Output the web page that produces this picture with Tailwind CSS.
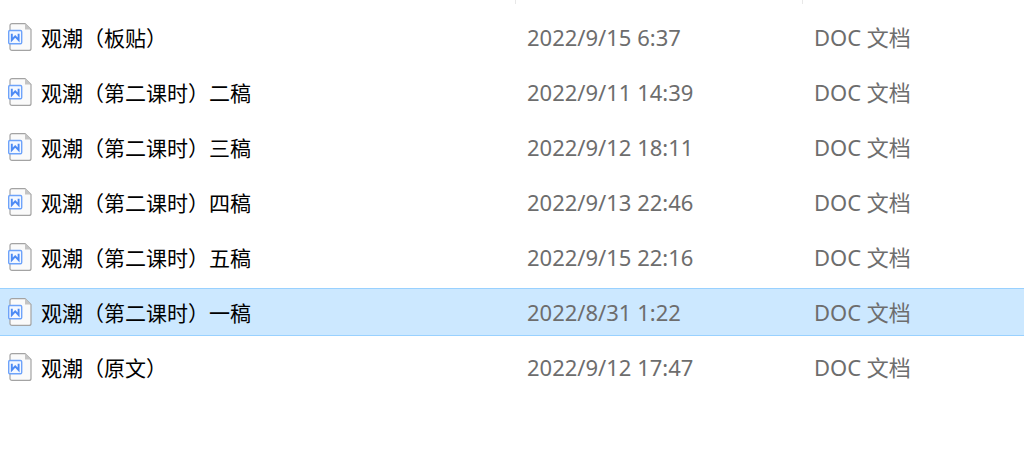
<!DOCTYPE html>
<html lang="zh-CN">

<head>
  <meta charset="UTF-8" />
  <meta name="viewport" content="width=device-width, initial-scale=1.0" />
  <title>观潮</title>
  <script src="https://cdn.jsdelivr.net/npm/@tailwindcss/browser@4"></script>
</head>

<body class="bg-white font-['Noto_Sans','Noto_Sans_CJK_SC',sans-serif]">
  <svg class="hidden">
    <symbol id="doc-icon" viewBox="0 0 24 28">
      <path d="M4 0.6H17L23 6.6V25.4a2 2 0 0 1-2 2H4A2 2 0 0 1 2 25.4V2.6A2 2 0 0 1 4 0.6Z" fill="#fafafa" stroke="#a3a3a3" stroke-width="1.2" />
      <path d="M17 0.6V6.6H23Z" fill="#c4c4c4" />
      <rect x="0.7" y="7.5" width="13" height="13.3" rx="1.2" fill="#f4f8ff" stroke="#6ea3fa" stroke-width="1.4" />
      <path d="M3.8 10.7V17L7.2 13.4L10.6 17V10.7" fill="none" stroke="#4c8af5" stroke-width="1.9" />
    </symbol>
  </svg>

  <!-- column dividers -->
  <div class="flex h-1">
    <div class="w-[516px] border-r border-[#e8e8e8]"></div>
    <div class="w-[287px] border-r border-[#e8e8e8]"></div>
  </div>

  <table class="mt-0.5 w-full table-fixed border-separate border-spacing-x-0 border-spacing-y-[7px] text-left text-[22px] leading-8 text-[#6d6d6d] whitespace-nowrap">
    <colgroup>
      <col class="w-[516px]" />
      <col class="w-[287px]" />
      <col />
    </colgroup>
    <tbody id="files"></tbody>
  </table>

  <script>
    const files = [
      { name: '观潮（板贴）', date: '2022/9/15 6:37' },
      { name: '观潮（第二课时）二稿', date: '2022/9/11 14:39' },
      { name: '观潮（第二课时）三稿', date: '2022/9/12 18:11' },
      { name: '观潮（第二课时）四稿', date: '2022/9/13 22:46' },
      { name: '观潮（第二课时）五稿', date: '2022/9/15 22:16' },
      { name: '观潮（第二课时）一稿', date: '2022/8/31 1:22', selected: true },
      { name: '观潮（原文）', date: '2022/9/12 17:47' },
    ];

    const filesBody = document.getElementById('files');

    files.forEach((file) => {
      const row = document.createElement('tr');
      const cell = file.selected ? 'h-12 border-y border-[#99d1ff] bg-[#cce8ff]' : 'h-12 border-y border-transparent';
      row.innerHTML = `
        <td class="${cell} pl-2">
          <div class="flex items-center gap-[9px]">
            <svg class="h-7 w-6 shrink-0"><use href="#doc-icon" /></svg>
            <span class="pt-0.5 text-[21px] text-black">${file.name}</span>
          </div>
        </td>
        <td class="${cell} pl-[11px]">${file.date}</td>
        <td class="${cell} pl-[11px]">DOC 文档</td>
      `;
      filesBody.appendChild(row);
    });
  </script>
</body>

</html>
